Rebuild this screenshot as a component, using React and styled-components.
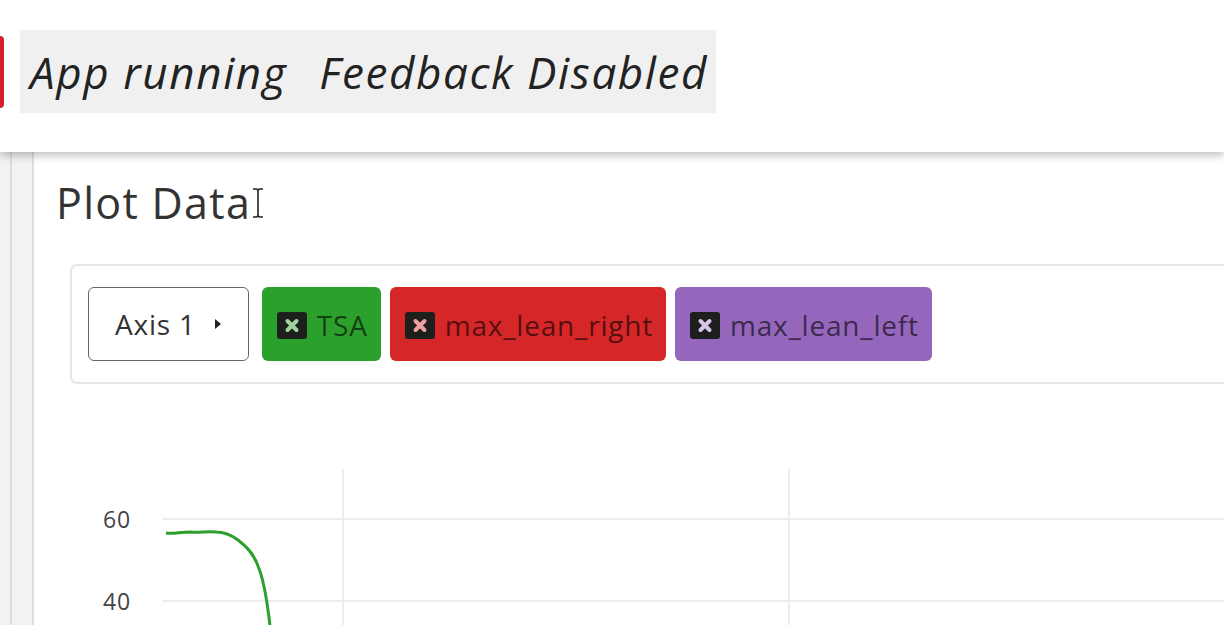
import React from 'react';
import styled, { createGlobalStyle } from 'styled-components';

const GlobalStyle = createGlobalStyle`
  html, body {
    margin: 0;
    padding: 0;
    background: #ffffff;
    font-family: 'Open Sans', 'Liberation Sans', sans-serif;
    overflow: hidden;
  }
`;

const Page = styled.div`
  display: flex;
  flex-direction: column;
  width: 1224px;
  height: 625px;
  overflow: hidden;
`;

const Header = styled.header`
  position: relative;
  z-index: 2;
  display: flex;
  align-items: flex-start;
  gap: 16px;
  height: 152px;
  padding-top: 30px;
  box-sizing: border-box;
  background: #ffffff;
  box-shadow: 0 3px 9px rgba(0, 0, 0, 0.28);
`;

const StatusMarker = styled.div`
  width: 4px;
  height: 72px;
  margin-top: 6px;
  background: #d11f2e;
  border-radius: 0 4px 4px 0;
`;

const StatusBox = styled.div`
  display: flex;
  align-items: center;
  height: 83px;
  padding: 0 8px 0 10px;
  background: #f0f0f0;
  font-style: italic;
  font-size: 44px;
  color: #222;
  letter-spacing: 1.6px;
`;

const StatusItem = styled.span`
  margin-right: ${(p) => p.gap || 0}px;
`;

const Body = styled.div`
  display: flex;
  flex: 1;
  min-height: 0;
`;

const Strip = styled.div`
  width: ${(p) => p.w}px;
  background: #f2f2f2;
  border-right: 2px solid #dedede;
`;

const Content = styled.main`
  flex: 1;
  display: flex;
  flex-direction: column;
  padding-left: 22px;
  min-width: 0;
`;

const Title = styled.h2`
  display: flex;
  align-items: center;
  margin: 23px 0 0 0;
  font-weight: 400;
  font-size: 43px;
  line-height: 56px;
  letter-spacing: 1.3px;
  color: #333;
`;

const Toolbar = styled.div`
  display: flex;
  align-items: center;
  gap: 9px;
  margin: 33px -40px 0 14px;
  padding: 21px 16px;
  border: 2px solid #e6e6e6;
  border-radius: 7px;
`;

const AxisButton = styled.button`
  display: flex;
  align-items: center;
  gap: 18px;
  height: 74px;
  padding: 0 26px 0 26px;
  margin-right: 4px;
  background: #fff;
  border: 1px solid #666;
  border-radius: 6px;
  font-family: inherit;
  font-size: 28px;
  letter-spacing: 0.8px;
  color: #333;
`;

const Chip = styled.div`
  display: flex;
  align-items: center;
  gap: 10px;
  height: 74px;
  padding: 2px 13px 0 15px;
  box-sizing: border-box;
  background: ${(p) => p.bg};
  border-radius: 6px;
  font-size: 28px;
  letter-spacing: 0.8px;
  color: rgba(0, 0, 0, 0.62);
`;

const ChartWrap = styled.div`
  flex: 1;
  margin-left: -22px;
`;

const CloseIcon = ({ tint }) => (
  <svg width="30" height="27" viewBox="0 0 30 27">
    <rect x="0" y="0" width="30" height="27" rx="3" fill="#1c1f1c" />
    <path d="M10.5 9 L19.5 18 M19.5 9 L10.5 18" stroke={tint} strokeWidth="4" strokeLinecap="round" />
  </svg>
);

const Caret = () => (
  <svg width="8" height="12" viewBox="0 0 8 12">
    <path d="M1 1 L7 6 L1 11 Z" fill="#222" />
  </svg>
);

const TextCursor = () => (
  <svg width="14" height="32" viewBox="0 0 14 32">
    <path d="M2 2 H5 Q7 2 7 4 V28 Q7 30 5 30 H2 M12 2 H9 Q7 2 7 4 M7 28 Q7 30 9 30 H12" fill="none" stroke="#222" strokeWidth="1.6" />
  </svg>
);

const series = [
  { name: 'TSA', bg: '#2ca02c', tint: '#9fd49f' },
  { name: 'max_lean_right', bg: '#d62728', tint: '#f0a0a0' },
  { name: 'max_lean_left', bg: '#9467bd', tint: '#d8c6ea' },
];

const Chart = () => (
  <svg width="1190" height="242" viewBox="0 0 1190 242">
    <g stroke="#ececec" strokeWidth="2">
      <line x1="129" y1="135" x2="1190" y2="135" />
      <line x1="129" y1="217" x2="1190" y2="217" />
      <line x1="309" y1="85" x2="309" y2="242" />
      <line x1="755" y1="85" x2="755" y2="242" />
    </g>
    <g fontFamily="'Open Sans', 'Liberation Sans', sans-serif" fontSize="23" fill="#444" textAnchor="end" letterSpacing="0.8">
      <text x="97" y="144">60</text>
      <text x="97" y="226">40</text>
    </g>
    <path
      d="M132 149 C140 150 146 148 156 148 C166 149 172 147 182 148 C190 148 196 150 204 156 C212 162 220 170 224 182 C230 196 233 215 236 242"
      fill="none"
      stroke="#2ca02c"
      strokeWidth="3"
      strokeLinejoin="round"
    />
  </svg>
);

export default function App() {
  return (
    <Page>
      <GlobalStyle />
      <Header>
        <StatusMarker />
        <StatusBox>
          <StatusItem gap={32}>App running</StatusItem>
          <StatusItem>Feedback Disabled</StatusItem>
        </StatusBox>
      </Header>
      <Body>
        <Strip w={10} />
        <Strip w={20} />
        <Content>
          <Title>
            Plot Data
            <TextCursor />
          </Title>
          <Toolbar>
            <AxisButton>
              Axis 1 <Caret />
            </AxisButton>
            {series.map((s) => (
              <Chip key={s.name} bg={s.bg}>
                <CloseIcon tint={s.tint} />
                {s.name}
              </Chip>
            ))}
          </Toolbar>
          <ChartWrap>
            <Chart />
          </ChartWrap>
        </Content>
      </Body>
    </Page>
  );
}
